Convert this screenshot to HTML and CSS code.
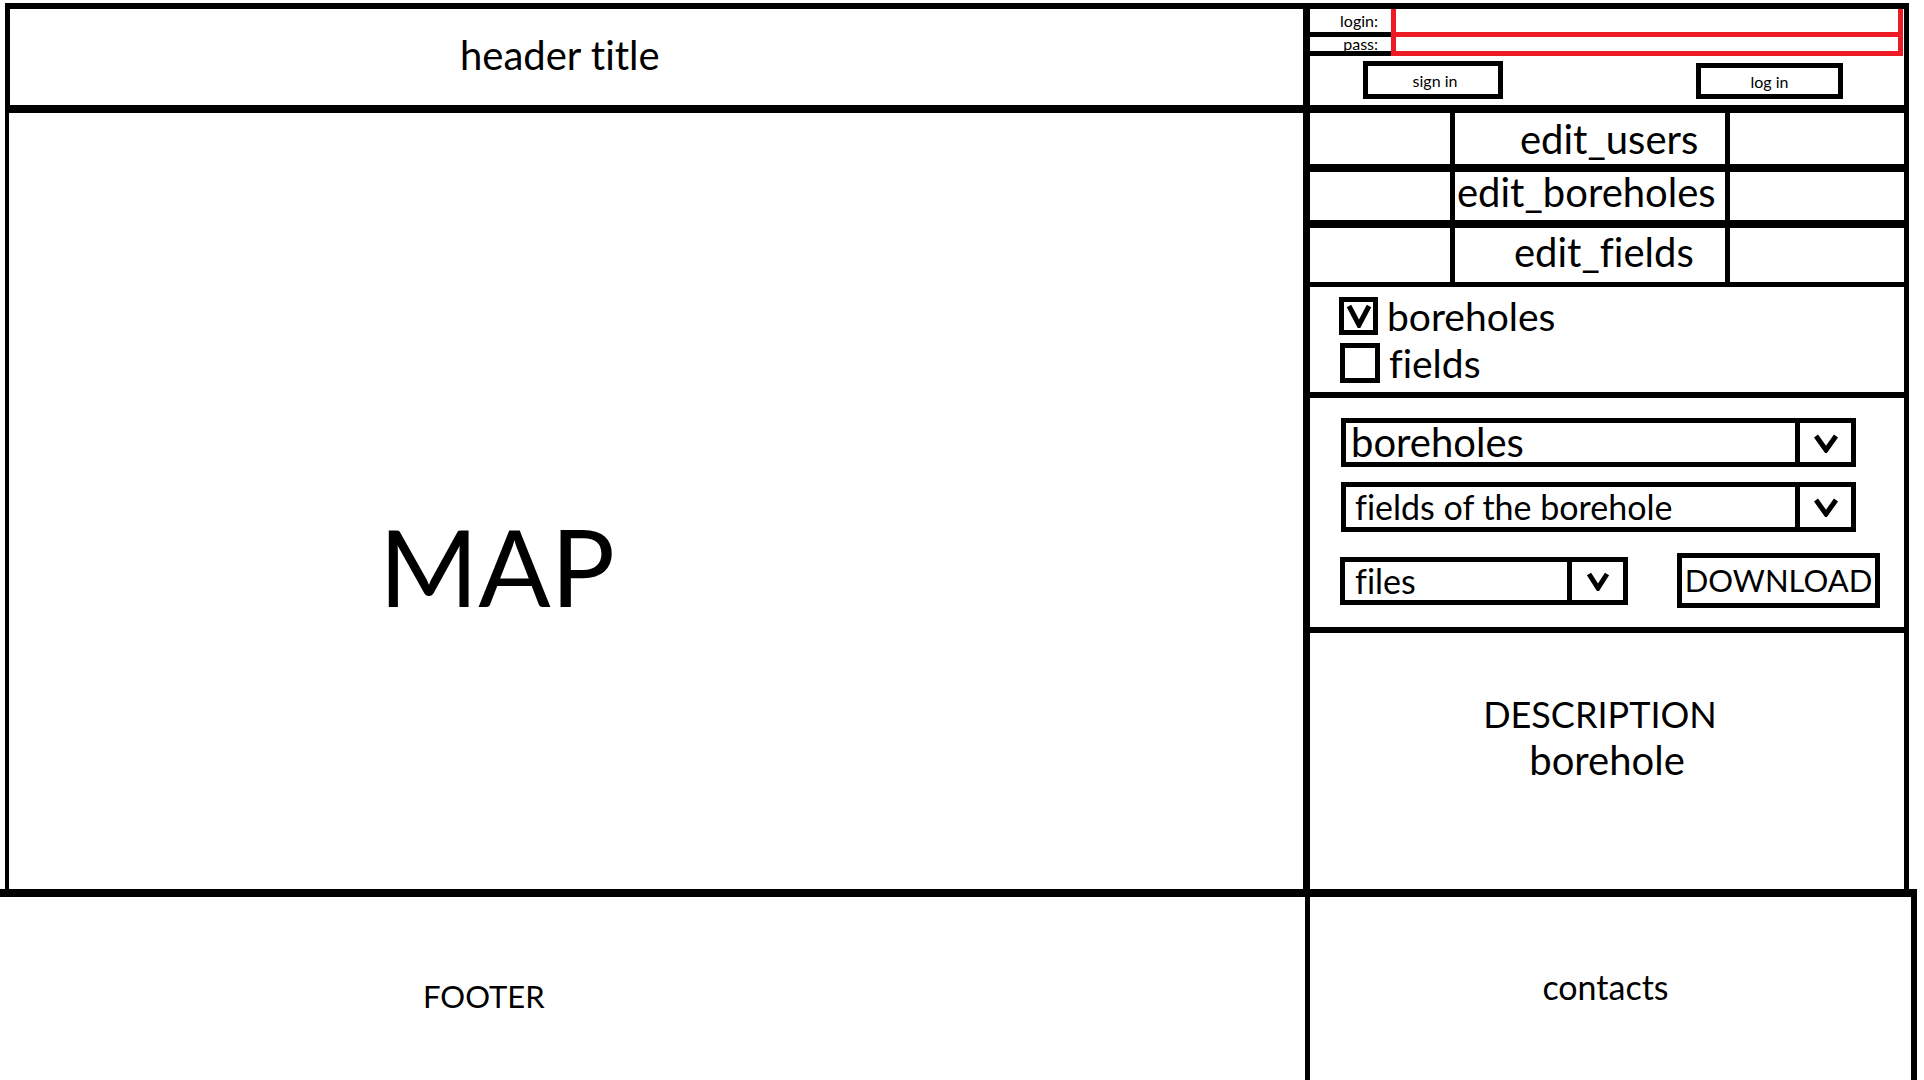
FILE: index.html
```html
<!DOCTYPE html>
<html lang="en">
<head>
<meta charset="utf-8">
<title>Boreholes</title>
<link rel="stylesheet" href="styles.css">
</head>
<body>
<div class="page">
  <div class="top">
    <header class="title-cell"><h1 class="title">header title</h1></header>
    <div class="auth">
      <div class="cred">
        <label class="cred-label cred-label--login">login:</label>
        <div class="cred-input cred-input--login"></div>
        <label class="cred-label cred-label--pass">pass:</label>
        <div class="cred-input cred-input--pass"></div>
      </div>
      <div class="auth-actions">
        <button class="btn btn--signin">sign in</button>
        <button class="btn btn--login">log in</button>
      </div>
    </div>
    <main class="map"><span class="map-label">MAP</span></main>
    <aside class="panel">
      <nav class="edit-list">
        <div class="edit-row edit-row--users"><span class="edit-side"></span><span class="edit-link">edit_users</span><span class="edit-side"></span></div>
        <div class="edit-row edit-row--boreholes"><span class="edit-side"></span><span class="edit-link">edit_boreholes</span><span class="edit-side"></span></div>
        <div class="edit-row edit-row--fields"><span class="edit-side"></span><span class="edit-link">edit_fields</span><span class="edit-side"></span></div>
      </nav>
      <section class="layers">
        <div class="check">
          <span class="check-box check-box--on"><svg class="tick" viewBox="0 0 26 24" width="26" height="24"><polyline points="3,2 13,21 23,2" fill="none" stroke="#000" stroke-width="5"/></svg></span>
          <span class="check-label">boreholes</span>
        </div>
        <div class="check">
          <span class="check-box check-box--off"></span>
          <span class="check-label">fields</span>
        </div>
      </section>
      <section class="selectors">
        <div class="select select--main">
          <span class="select-value">boreholes</span>
          <span class="select-arrow"><svg viewBox="0 0 30 20" width="30" height="20"><polyline points="5,3 15,17 25,3" fill="none" stroke="#000" stroke-width="5"/></svg></span>
        </div>
        <div class="select select--fields">
          <span class="select-value">fields of the borehole</span>
          <span class="select-arrow"><svg viewBox="0 0 30 20" width="30" height="20"><polyline points="5,3 15,17 25,3" fill="none" stroke="#000" stroke-width="5"/></svg></span>
        </div>
        <div class="files-row">
          <div class="select select--files">
            <span class="select-value">files</span>
            <span class="select-arrow"><svg viewBox="0 0 30 20" width="30" height="20"><polyline points="6,3 15,17 24,3" fill="none" stroke="#000" stroke-width="5"/></svg></span>
          </div>
          <button class="btn btn--download">DOWNLOAD</button>
        </div>
      </section>
      <section class="description">
        <span class="description-title">DESCRIPTION</span>
        <span class="description-subject">borehole</span>
      </section>
    </aside>
  </div>
  <footer class="foot">
    <div class="foot-left">FOOTER</div>
    <div class="foot-right">contacts</div>
  </footer>
</div>
</body>
</html>
```
FILE: styles.css
```css
* { box-sizing: border-box; }
html, body { margin: 0; padding: 0; background: #fff; }
body {
  font-family: Lato, "Open Sans", sans-serif;
  font-variant-ligatures: none;
  color: #000;
  width: 1924px;
  height: 1080px;
  overflow: hidden;
}

.top {
  display: grid;
  grid-template-columns: 1305px 599px;
  grid-template-rows: 110px 776px;
  margin: 3px 0 0 5px;
  width: 1904px;
}

.title-cell {
  border-style: solid;
  border-color: #000;
  border-width: 6px 7px 8px 5px;
  padding: 26px 0 0 450px;
}
.title {
  margin: 0;
  font-weight: 400;
  font-size: 40px;
  line-height: 40px;
}

.auth {
  border-style: solid;
  border-color: #000;
  border-width: 6px 5px 8px 0;
  display: flex;
  flex-direction: column;
}
.cred {
  display: grid;
  grid-template-columns: 81px 1fr;
  grid-template-rows: 28px 19px;
}
.cred-label {
  border-bottom: 5px solid #000;
  font-size: 16px;
  text-align: right;
  padding-right: 13px;
}
.cred-label--login { line-height: 23px; }
.cred-label--pass { line-height: 14px; }
.cred-input {
  border: 5px solid #ed1c24;
  border-top: 0;
  margin-right: 1px;
}

.auth-actions {
  flex: 1;
  display: flex;
  align-items: flex-end;
  gap: 193px;
  padding: 0 0 6px 53px;
}

.btn {
  font: inherit;
  color: #000;
  background: #fff;
  border: 5px solid #000;
  padding: 0;
  margin: 0;
}
.btn--signin { width: 140px; height: 38px; font-size: 16px; padding-left: 4px; }
.btn--login { width: 147px; height: 36px; font-size: 16px; }

.map {
  border-left: 4px solid #000;
  border-right: 7px solid #000;
  padding: 399px 0 0 370px;
}
.map-label {
  display: block;
  font-size: 107px;
  line-height: 107px;
}

.panel {
  border-right: 5px solid #000;
  display: flex;
  flex-direction: column;
}

.edit-row {
  display: grid;
  grid-template-columns: 140px 280px 1fr;
  border-bottom: 8px solid #000;
}
.edit-link {
  border-left: 5px solid #000;
  border-right: 5px solid #000;
  font-size: 40px;
  white-space: nowrap;
}
.edit-row--users { height: 59px; }
.edit-row--users .edit-link { line-height: 52px; padding-left: 65px; }
.edit-row--boreholes { height: 56px; }
.edit-row--boreholes .edit-link { line-height: 41px; padding-left: 2px; }
.edit-row--fields { height: 59px; border-bottom-width: 5px; }
.edit-row--fields .edit-link { line-height: 48px; padding-left: 59px; }

.layers {
  height: 111px;
  border-bottom: 6px solid #000;
  padding: 10px 0 0 29px;
  display: flex;
  flex-direction: column;
  gap: 8px;
}
.check {
  display: flex;
  align-items: center;
  gap: 9px;
  font-size: 39px;
}
.check-label { line-height: 38px; }
.check-box {
  border: 5px solid #000;
  display: flex;
  align-items: center;
  justify-content: center;
}
.check-box--on { width: 39px; height: 38px; }
.check-box--off { width: 40px; height: 40px; margin-left: 1px; }

.selectors {
  height: 235px;
  border-bottom: 6px solid #000;
  padding: 20px 0 0 31px;
  display: flex;
  flex-direction: column;
}
.select {
  display: flex;
  border: 5px solid #000;
}
.select-value {
  flex: 1;
  white-space: nowrap;
}
.select-arrow {
  width: 56px;
  border-left: 5px solid #000;
  display: flex;
  align-items: center;
  justify-content: center;
}
.select--main { width: 515px; height: 49px; }
.select--main .select-value { font-size: 40px; line-height: 39px; padding-left: 5px; }
.select--fields { width: 515px; height: 50px; margin-top: 15px; }
.select--fields .select-value { font-size: 34px; line-height: 40px; padding-left: 9px; }

.files-row {
  display: flex;
  align-items: flex-start;
  margin-top: 21px;
}
.select--files { width: 288px; height: 48px; margin-top: 4px; margin-left: -1px; }
.select--files .select-value { font-size: 34px; line-height: 38px; padding-left: 10px; }
.btn--download {
  width: 203px;
  height: 55px;
  margin-left: 49px;
  font-size: 31px;
  line-height: 45px;
}

.description {
  flex: 1;
  display: flex;
  flex-direction: column;
  align-items: center;
  padding-top: 59px;
}
.description-title {
  font-size: 36px;
  line-height: 44px;
  padding-right: 14px;
}
.description-subject {
  font-size: 40px;
  line-height: 48px;
}

.foot {
  display: grid;
  grid-template-columns: 1310px 607px;
  width: 1917px;
  height: 191px;
  border-top: 8px solid #000;
}
.foot-left {
  border-right: 5px solid #000;
  padding: 80px 0 0 423px;
  font-size: 31px;
}
.foot-right {
  border-right: 6px solid #000;
  text-align: center;
  padding: 69px 10px 0 0;
  font-size: 34px;
}
```
